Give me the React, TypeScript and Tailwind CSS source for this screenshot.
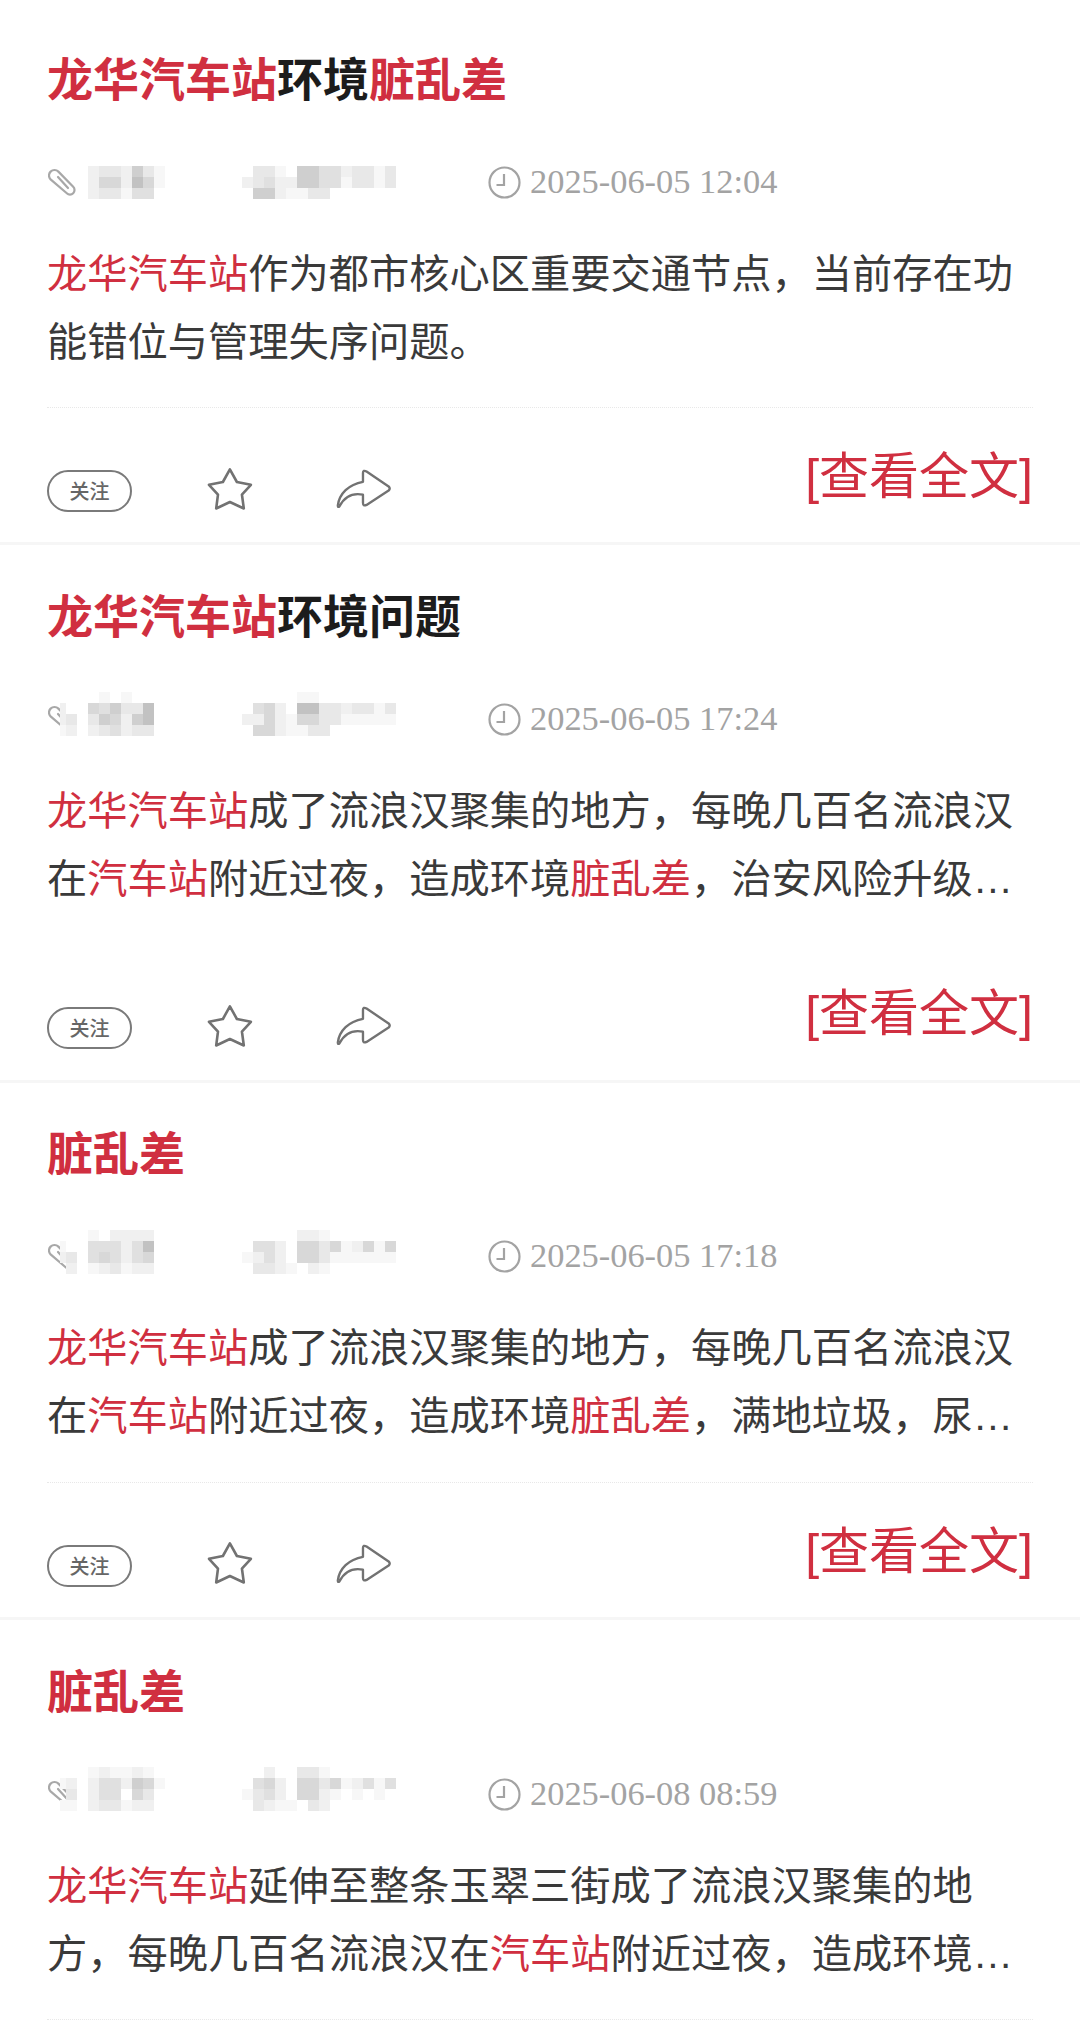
const SHADES: Record<string, string> = {
  "1": "#f7f7f7",
  "2": "#f0f0f0",
  "3": "#e8e8e8",
  "4": "#e0e0e0",
  "5": "#d8d8d8",
  "6": "#cfcfcf",
  "7": "#c2c2c2",
};

const BLANK = "... ...... . ....... . .............";

type Seg = [string, boolean];

type Item = {
  title: Seg[];
  date: string;
  body: Seg[];
  dashed: boolean;
  mosaic: string[];
};

const ITEMS: Item[] = [
  {
    title: [["龙华汽车站", true], ["环境", false], ["脏乱差", true]],
    date: "2025-06-05 12:04",
    body: [["龙华汽车站", true], ["作为都市核心区重要交通节点，当前存在功能错位与管理失序问题。", false]],
    dashed: true,
    mosaic: [
      BLANK,
      "... 233263 1 ....... . 331.664423313",
      "... 255275 1 ....... 2 3422664413313",
      "... 233144 . ....... . 6621133......",
    ],
  },
  {
    title: [["龙华汽车站", true], ["环境问题", false]],
    date: "2025-06-05 17:24",
    body: [
      ["龙华汽车站", true],
      ["成了流浪汉聚集的地方，每晚几百名流浪汉在", false],
      ["汽车站", true],
      ["附近过夜，造成环境", false],
      ["脏乱差", true],
      ["，治安风险升级，严重影响周边居民的日常生活。", false],
    ],
    dashed: false,
    mosaic: [
      "... .1.1.. . ....... . ....11.......",
      "2.. 546337 . ....... . 452.773323313",
      "23. 365267 . ....... 2 2521553311111",
      "12. 234233 . ....... . 5521133......",
    ],
  },
  {
    title: [["脏乱差", true]],
    date: "2025-06-05 17:18",
    body: [
      ["龙华汽车站", true],
      ["成了流浪汉聚集的地方，每晚几百名流浪汉在", false],
      ["汽车站", true],
      ["附近过夜，造成环境", false],
      ["脏乱差", true],
      ["，满地垃圾，尿骚味弥漫，严重影响周边居民的日常生活。", false],
    ],
    dashed: true,
    mosaic: [
      "... 1.2222 . ....... . ....221......",
      "1.. 444247 . ....... . 442.553512515",
      "23. 454245 . ....... 1 242.553111111",
      ".2. 123122 . ....... . 3321.21......",
    ],
  },
  {
    title: [["脏乱差", true]],
    date: "2025-06-08 08:59",
    body: [
      ["龙华汽车站", true],
      ["延伸至整条玉翠三街成了流浪汉聚集的地方，每晚几百名流浪汉在", false],
      ["汽车站", true],
      ["附近过夜，造成环境", false],
      ["脏乱差", true],
      ["，满地垃圾，严重影响周边居民的日常生活。", false],
    ],
    dashed: true,
    mosaic: [
      "... 121121 . ....... . .2..331......",
      "12. 244265 1 ....... . 452.553512414",
      ".3. 244.53 . ....... 1 342.5521.1.1.",
      "11. 233122 . ....... . 3211.32......",
    ],
  },
];

function Mosaic({ rows }: { rows: string[] }) {
  const cells = rows.flatMap((r) => r.replace(/ /g, "").split(""));
  return (
    <div className="absolute left-[13px] top-[-9px] grid grid-cols-[6px_repeat(30,11px)] auto-rows-[11px] blur-[0.7px]">
      {cells.map((c, i) => (
        <div key={i} style={{ backgroundColor: SHADES[c] ?? "transparent" }} />
      ))}
    </div>
  );
}

function ClipIcon() {
  return (
    <svg width="28" height="28" viewBox="0 0 28 28" fill="none" stroke="#a8a8a8" strokeWidth="2.2" strokeLinecap="round" className="ml-[1px] shrink-0">
      <path d="M2.6 11.4 A5.5 5.5 0 0 1 10.4 3.6 L25.2 18.8 A4.5 4.5 0 0 1 18.8 25.2 Z" />
      <path d="M10 9 L20 20" />
    </svg>
  );
}

function ClockIcon() {
  return (
    <svg width="33" height="33" viewBox="0 0 33 33" fill="none" stroke="#a3a3a3" strokeWidth="2.2" className="shrink-0">
      <circle cx="16.5" cy="16.5" r="15" />
      <path d="M16 8 V19 H8.5" />
    </svg>
  );
}

function StarIcon() {
  return (
    <svg width="46" height="44" viewBox="0 0 44 42" fill="none" stroke="#727272" strokeWidth="2.5" strokeLinejoin="round" className="shrink-0">
      <path d="M21.9 2.2 L28.6 14.3 L42 17 L33.4 26.3 L35.2 39.6 L21.9 33.4 L8.8 39.6 L10.5 26.3 L1.9 17 L15.2 14.3 Z" />
    </svg>
  );
}

function ShareIcon() {
  return (
    <svg width="56" height="39" viewBox="0 0 54 38" fill="none" stroke="#727272" strokeWidth="2.3" strokeLinejoin="round" className="shrink-0">
      <path d="M1.5 35.5 C3 24 12 15 26 12.5 L26 4 Q26 0.5 29.5 2.5 L51 17 Q53 19 51 21 L29.5 35 Q26 36.5 26 33 L26 25 C16 23 8 27 3 36.5 Q1.5 38 1.5 35.5 Z" />
    </svg>
  );
}

function Segs({ segs }: { segs: Seg[] }) {
  return (
    <>
      {segs.map(([t, red], i) => (
        <span key={i} className={red ? "text-[#d02f40]" : undefined}>
          {t}
        </span>
      ))}
    </>
  );
}

function Card({ item }: { item: Item }) {
  return (
    <div className="border-b-[3px] border-[#f6f6f6] px-[47px] pt-[35.5px] pb-[30.4px]">
      <h2 className="h-[64px] text-[46px] font-bold leading-[64px] text-[#1c1c1c] font-['Noto_Sans_CJK_SC',sans-serif]">
        <Segs segs={item.title} />
      </h2>
      <div className="relative mt-[56.5px] flex h-[36px] items-center">
        <ClipIcon />
        <Mosaic rows={item.mosaic} />
        <div className="w-[412px] shrink-0" />
        <ClockIcon />
        <span className="mb-[3px] ml-[9px] text-[34.4px] leading-[36px] text-[#a3a3a3] font-['Liberation_Serif',serif]">
          {item.date}
        </span>
      </div>
      <p className="mt-[40.5px] line-clamp-2 h-[136px] text-[40.25px] leading-[68px] text-[#3a3a3a] font-['Liberation_Sans','Noto_Sans_CJK_SC',sans-serif]">
        <Segs segs={item.body} />
      </p>
      <div className={item.dashed ? "mt-[30.5px] border-t border-dotted border-[#e8e8e8]" : "mt-[30.5px] border-t border-transparent"} />
      <div className="mt-[62px] flex h-[42px] items-start justify-between">
        <div className="flex h-[42px] items-center">
          <span className="flex h-[42px] w-[85px] items-center justify-center rounded-full border-2 border-[#7a7a7a] text-[20px] font-medium text-[#666666] font-['Noto_Sans_CJK_SC',sans-serif]">
            关注
          </span>
          <div className="mb-[5px] ml-[75px]">
            <StarIcon />
          </div>
          <div className="mb-[5px] ml-[83px]">
            <ShareIcon />
          </div>
        </div>
        <a className="-mt-[18px] text-[50px] leading-[50px] text-[#d02f40] font-['Liberation_Sans','Noto_Sans_CJK_SC',sans-serif]">
          [查看全文]
        </a>
      </div>
    </div>
  );
}

export default function App() {
  return (
    <div className="h-[2025px] w-[1080px] overflow-hidden bg-white pt-[8px]">
      {ITEMS.map((item, i) => (
        <Card key={i} item={item} />
      ))}
    </div>
  );
}
